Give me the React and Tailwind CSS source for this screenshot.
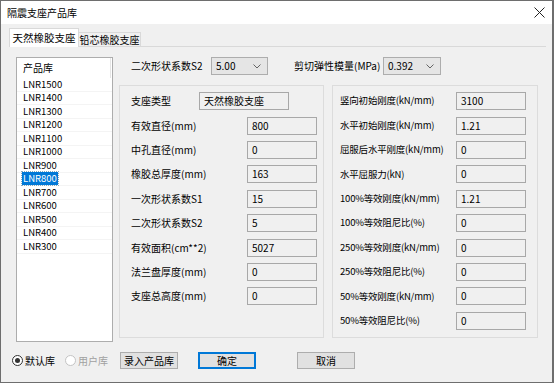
import React from "react";

const leftRows = [
  ["支座类型", "天然橡胶支座", true],
  ["有效直径(mm)", "800"],
  ["中孔直径(mm)", "0"],
  ["橡胶总厚度(mm)", "163"],
  ["一次形状系数S1", "15"],
  ["二次形状系数S2", "5"],
  ["有效面积(cm**2)", "5027"],
  ["法兰盘厚度(mm)", "0"],
  ["支座总高度(mm)", "0"],
];

const rightRows = [
  ["竖向初始刚度(kN/mm)", "3100"],
  ["水平初始刚度(kN/mm)", "1.21"],
  ["屈服后水平刚度(kN/mm)", "0"],
  ["水平屈服力(kN)", "0"],
  ["100%等效刚度(kN/mm)", "1.21"],
  ["100%等效阻尼比(%)", "0"],
  ["250%等效刚度(kN/mm)", "0"],
  ["250%等效阻尼比(%)", "0"],
  ["50%等效刚度(kN/mm)", "0"],
  ["50%等效阻尼比(%)", "0"],
];

const items = [
  "LNR1500",
  "LNR1400",
  "LNR1300",
  "LNR1200",
  "LNR1100",
  "LNR1000",
  "LNR900",
  "LNR800",
  "LNR700",
  "LNR600",
  "LNR500",
  "LNR400",
  "LNR300",
];

function Box({ value, wide }) {
  return (
    <div
      className={`${wide ? "w-[90px]" : "w-[70px]"} h-[18px] border border-[#a8a8a8] bg-[#f0f0f0] flex items-center pl-[4px] text-[10px] leading-none`}
    >
      {value}
    </div>
  );
}

function Combo({ value, w }) {
  return (
    <div
      className={`${w} h-[18px] border border-[#adadad] bg-[#e5e5e5] flex items-center justify-between pl-[4px] pr-[6px] text-[10px] leading-none`}
    >
      <span>{value}</span>
      <svg width="8" height="5" viewBox="0 0 8 5">
        <path d="M0.5 0.5 L4 4 L7.5 0.5" fill="none" stroke="#555" strokeWidth="0.9" />
      </svg>
    </div>
  );
}

function Button({ children, primary, w = "w-[58px]" }) {
  return (
    <div
      className={`${w} h-[17px] flex items-center justify-center bg-[#e1e1e1] text-[10px] leading-none border ${
        primary ? "border-[#0078d7] outline outline-1 outline-[#0078d7] -outline-offset-2" : "border-[#adadad]"
      }`}
    >
      {children}
    </div>
  );
}

export default function App() {
  return (
    <div className="w-[554px] h-[383px] bg-[#f0f0f0] border-t border-l border-b border-r-2 border-[#6e6e6e] flex flex-col font-['Noto_Sans_CJK_SC','Noto_Sans',sans-serif] text-black overflow-hidden">
      {/* Title bar */}
      <div className="h-[23px] bg-white flex items-center justify-between pl-[6px] pr-[7px] shrink-0">
        <span className="text-[10px] leading-none">隔震支座产品库</span>
        <svg width="11" height="11" viewBox="0 0 11 11">
          <path d="M0.5 0.5 L10.5 10.5 M10.5 0.5 L0.5 10.5" stroke="#222" strokeWidth="1" />
        </svg>
      </div>

      {/* Tabs */}
      <div className="mt-[5px] ml-[8px] flex items-end h-[17px] relative z-10">
        <div className="w-[70px] h-[19px] -mb-[1px] bg-white border border-b-0 border-[#d9d9d9] flex items-center justify-center text-[10.5px] leading-none">
          天然橡胶支座
        </div>
        <div className="w-[62px] h-[14px] bg-[#f0f0f0] border border-l-0 border-b-0 border-[#d9d9d9] flex items-center justify-center text-[10px] leading-none">
          铅芯橡胶支座
        </div>
      </div>

      {/* Panel */}
      <div className="ml-[8px] w-[537px] border-t border-[#d9d9d9] flex pt-[10px] pl-[7px]">
        {/* List */}
        <div className="w-[97px] h-[285px] bg-white border border-[#adadad] flex flex-col shrink-0">
          <div className="h-[20px] flex items-center relative shrink-0">
            <span className="pl-[6px] text-[10px] leading-none">产品库</span>
            <div className="absolute right-[1px] top-0 h-full w-px bg-[#e5e5e5]" />
          </div>
          {items.map((it) => (
            <div
              key={it}
              className="h-[13.5px] flex items-center pl-[5px] border-b border-[#f4f4f4] text-[9.5px] leading-none"
            >
              {it === "LNR800" ? (
                <span className="bg-[#0078d7] text-white px-[1px] h-[13px] flex items-center outline outline-1 outline-dotted outline-[#8ab]">
                  {it}
                </span>
              ) : (
                <span className="px-[1px]">{it}</span>
              )}
            </div>
          ))}
        </div>

        {/* Right area */}
        <div className="ml-[6px] flex flex-col">
          {/* Combos row */}
          <div className="h-[18px] flex items-center">
            <span className="ml-[12px] w-[80px] text-[10px] leading-none">二次形状系数S2</span>
            <Combo value="5.00" w="w-[57px]" />
            <span className="ml-[26px] w-[89px] text-[10px] leading-none">剪切弹性模量(MPa)</span>
            <Combo value="0.392" w="w-[58px]" />
          </div>

          {/* Groups */}
          <div className="mt-[10px] flex gap-[8px]">
            <div className="w-[205px] h-[253px] border border-[#dcdcdc] pt-[3px] flex flex-col">
              {leftRows.map(([label, value, wide]) => (
                <div key={label} className="h-[24.4px] flex items-center pl-[11px]">
                  <span className={`${wide ? "w-[68px]" : "w-[116px]"} text-[10px] leading-none whitespace-nowrap`}>
                    {label}
                  </span>
                  <Box value={value} wide={wide} />
                </div>
              ))}
            </div>
            <div className="w-[206px] h-[253px] border border-[#dcdcdc] pt-[3px] flex flex-col">
              {rightRows.map(([label, value]) => (
                <div key={label} className="h-[24.4px] flex items-center pl-[7px]">
                  <span className="w-[116px] text-[9.5px] leading-none whitespace-nowrap tracking-[-0.2px]">
                    {label}
                  </span>
                  <Box value={value} />
                </div>
              ))}
            </div>
          </div>
        </div>
      </div>

      {/* Bottom row */}
      <div className="mt-[10px] ml-[11px] h-[17px] flex items-center">
        <div className="flex items-center">
          <div className="w-[11px] h-[11px] rounded-full border border-[#333] bg-white flex items-center justify-center">
            <div className="w-[5px] h-[5px] rounded-full bg-[#333]" />
          </div>
          <span className="ml-[2px] text-[10px] leading-none">默认库</span>
        </div>
        <div className="ml-[10px] flex items-center">
          <div className="w-[11px] h-[11px] rounded-full border border-[#c4c4c4] bg-white" />
          <span className="ml-[2px] text-[10px] leading-none text-[#a0a0a0]">用户库</span>
        </div>
        <div className="ml-[12px]">
          <Button>录入产品库</Button>
        </div>
        <div className="ml-[20px]">
          <Button primary>确定</Button>
        </div>
        <div className="ml-[41px]">
          <Button>取消</Button>
        </div>
      </div>
    </div>
  );
}
